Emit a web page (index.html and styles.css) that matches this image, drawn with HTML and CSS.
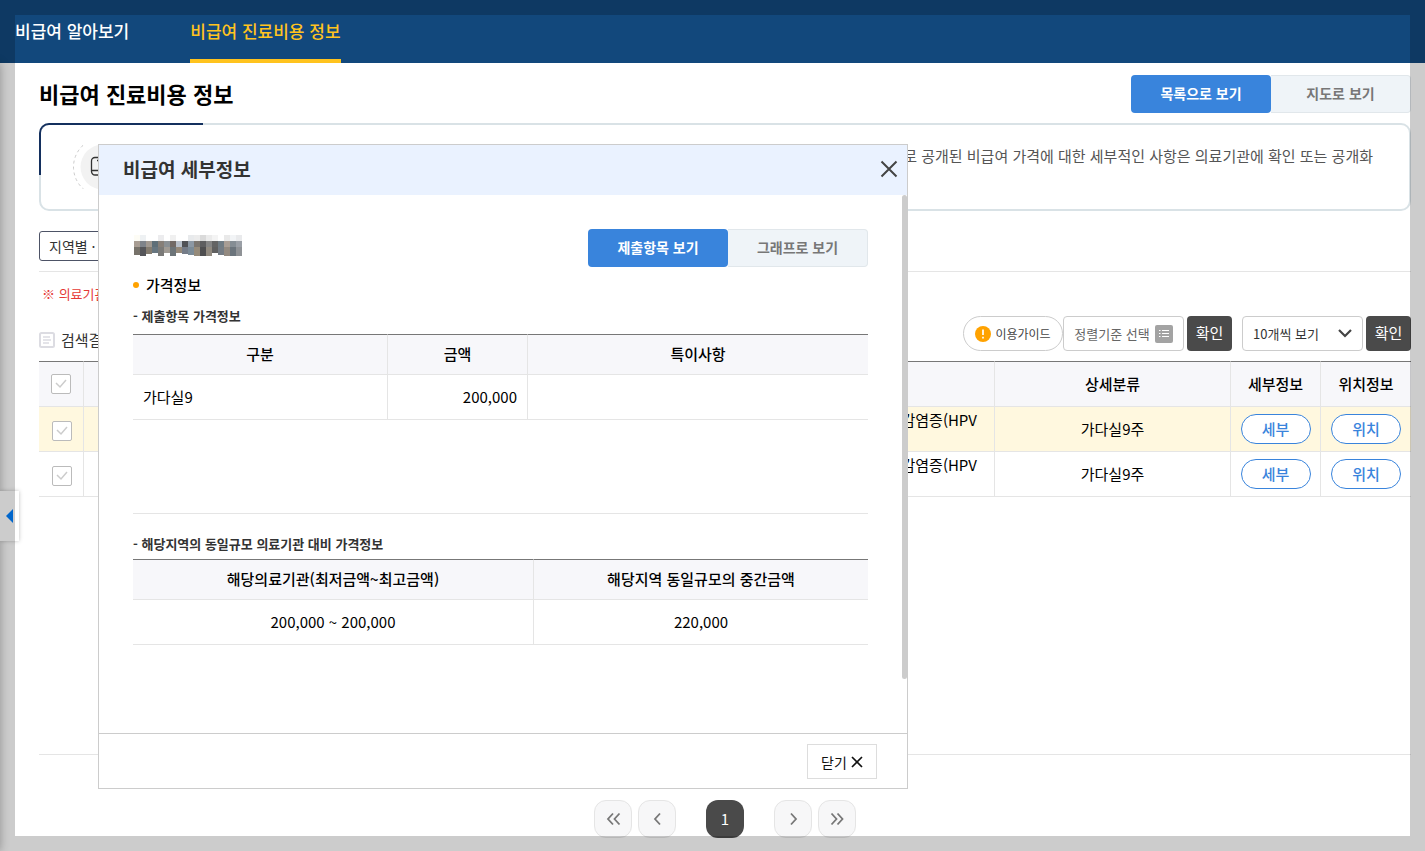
FILE: index.html
```html
<!DOCTYPE html>
<html lang="ko">
<head>
<meta charset="utf-8">
<title>비급여 진료비용 정보</title>
<link rel="stylesheet" href="styles.css">
</head>
<body>
<header class="gnb">
  <nav class="gnb-menu">
    <a href="#">비급여 알아보기</a>
    <a href="#" class="current" aria-current="page">비급여 진료비용 정보</a>
  </nav>
</header>

<main class="content">
  <div class="title-row">
    <h1>비급여 진료비용 정보</h1>
    <div class="toggle">
      <button type="button" class="on">목록으로 보기</button>
      <button type="button">지도로 보기</button>
    </div>
  </div>

  <section class="notice">
    <svg class="notice-icon" width="60" height="44" viewBox="0 0 60 44" fill="none">
      <circle cx="30" cy="22" r="29.500" stroke="#ccc" stroke-dasharray="3 3"/>
      <circle cx="30" cy="22" r="22.500" fill="#f2f2f2"/>
      <path d="M22 12.500h19v17.500H22a3.500 3.500 0 0 1-3.500-3.500V16a3.500 3.500 0 0 1 3.500-3.500zM18.500 25.500h22M24 15.500h2" stroke="#333" stroke-width="1.300"/>
    </svg>
    <p>으로 공개된 비급여 가격에 대한 세부적인 사항은 의료기관에 확인 또는 공개화</p>
  </section>

  <div class="filter"><button type="button" class="crumb">지역별 · 규모별</button></div>
  <p class="warn">※ 의료기관</p>

  <div class="toolbar">
    <h2>
      <svg width="16" height="16" viewBox="0 0 16 16" fill="none" stroke="#dcdce2"><rect x="1" y="1" width="14" height="14" rx="1.5" stroke-width="2"/><path d="M4 5h7M4 8h8M4 11h6" stroke-width="1.5"/></svg>
      검색결과
    </h2>
    <div class="tools">
      <button type="button" class="guide">
        <svg width="16" height="16" viewBox="0 0 16 16"><circle cx="8" cy="8" r="8" fill="#ffa200"/><path d="M8 3.500v5.500M8 10.700v1.800" stroke="#fff" stroke-width="1.700"/></svg>
        이용가이드
      </button>
      <button type="button" class="sort">정렬기준 선택
        <svg width="18" height="18" viewBox="0 0 18 18"><rect width="18" height="18" rx="2" fill="#a3a3a3"/><path d="M4 5.500h1.500M7 5.500h7M4 8.500h1.500M7 8.500h7M4 11.500h1.500M7 11.500h7" stroke="#fff"/></svg>
      </button>
      <button type="button" class="ok">확인</button>
      <select class="count" aria-label="표시 개수"><option>10개씩 보기</option></select>
      <button type="button" class="ok">확인</button>
    </div>
  </div>

  <table class="list">
    <colgroup><col class="c-check"><col><col class="c-item"><col class="c-detail"><col class="c-act"><col class="c-act"></colgroup>
    <thead>
      <tr><th><input type="checkbox" aria-label="전체 선택"></th><th></th><th></th><th>상세분류</th><th>세부정보</th><th>위치정보</th></tr>
    </thead>
    <tbody>
      <tr class="selected"><td class="pick"><input type="checkbox" aria-label="선택"></td><td></td><td class="item">감염증(HPV</td><td>가다실9주</td><td><button type="button" class="pill">세부</button></td><td><button type="button" class="pill">위치</button></td></tr>
      <tr><td class="pick"><input type="checkbox" aria-label="선택"></td><td></td><td class="item">감염증(HPV</td><td>가다실9주</td><td><button type="button" class="pill">세부</button></td><td><button type="button" class="pill">위치</button></td></tr>
    </tbody>
  </table>

  <nav class="pager" aria-label="페이지">
    <button type="button" aria-label="처음"><svg width="16" height="16" viewBox="0 0 16 16"><path d="M8 2.500 3 8l5 5.500M14.500 2.500 9.500 8l5 5.500"/></svg></button>
    <button type="button" aria-label="이전"><svg width="16" height="16" viewBox="0 0 16 16"><path d="M11 2.500 6 8l5 5.500"/></svg></button>
    <button type="button" class="page" aria-current="page">1</button>
    <button type="button" aria-label="다음"><svg width="16" height="16" viewBox="0 0 16 16"><path d="M6 2.500 11 8l-5 5.500"/></svg></button>
    <button type="button" aria-label="마지막"><svg width="16" height="16" viewBox="0 0 16 16"><path d="M2.500 2.500 7.500 8l-5 5.500M8.500 2.500 13.500 8l-5 5.500"/></svg></button>
  </nav>
</main>

<div class="side-shadow"></div>
<button type="button" class="side-tab" aria-label="메뉴 열기"><svg width="7" height="14" viewBox="0 0 7 14"><path d="M7 0v14L0 7z" fill="#0080ff"/></svg></button>

<section class="modal" role="dialog" aria-labelledby="modal-title">
  <header class="modal-head">
    <h2 id="modal-title">비급여 세부정보</h2>
    <button type="button" class="x" aria-label="닫기"><svg width="18" height="18" viewBox="0 0 18 18"><path d="M1.500 1.500l15 15M16.500 1.500l-15 15" stroke="#444" stroke-width="2"/></svg></button>
  </header>
  <div class="modal-body">
    <div class="hospital">
      <svg class="mosaic" width="109" height="22" viewBox="0 0 109 22" shape-rendering="crispEdges" role="img" aria-label="가려진 기관명">
        <g>
          <path fill="#fdfcf5" d="M1 0h6v6H1z"/><path fill="#eef1f3" d="M7 0h6v6H7z"/><path fill="#ececee" d="M25 0h6v6h-6z"/><path fill="#f0f0f0" d="M37 0h6v6h-6z"/>
          <path fill="#e8eaec" d="M55 0h6v6h-6z"/><path fill="#ececec" d="M61 0h6v6h-6z"/><path fill="#dadada" d="M67 0h6v6h-6z"/><path fill="#ebebeb" d="M73 0h6v6h-6z"/><path fill="#f4f4f4" d="M79 0h6v6h-6z"/>
          <path fill="#e9e9e9" d="M91 0h6v6h-6z"/><path fill="#f2f4f6" d="M97 0h6v6h-6z"/><path fill="#e9eaec" d="M103 0h6v6h-6z"/>
        </g>
        <g>
          <path fill="#a89d93" d="M1 6h6v6H1z"/><path fill="#7e838a" d="M7 6h6v6H7z"/><path fill="#a09890" d="M13 6h6v6h-6z"/><path fill="#5f6f78" d="M19 6h6v6h-6z"/><path fill="#867f78" d="M25 6h6v6h-6z"/><path fill="#8a9094" d="M31 6h6v6h-6z"/>
          <path fill="#726a66" d="M37 6h6v6h-6z"/><path fill="#b8c0ca" d="M43 6h6v6h-6z"/><path fill="#505256" d="M49 6h6v6h-6z"/><path fill="#8c98a4" d="M55 6h6v6h-6z"/><path fill="#7b7670" d="M61 6h6v6h-6z"/><path fill="#5e5e60" d="M67 6h6v6h-6z"/>
          <path fill="#858585" d="M73 6h6v6h-6z"/><path fill="#646464" d="M79 6h6v6h-6z"/><path fill="#707c84" d="M85 6h6v6h-6z"/><path fill="#a89d94" d="M91 6h6v6h-6z"/><path fill="#858d94" d="M97 6h6v6h-6z"/><path fill="#9a9fa6" d="M103 6h6v6h-6z"/>
        </g>
        <g>
          <path fill="#77726a" d="M1 12h6v8H1z"/><path fill="#55565a" d="M7 12h6v9H7z"/><path fill="#847c70" d="M13 12h6v7h-6z"/><path fill="#677680" d="M19 12h6v6h-6z"/><path fill="#7a7a78" d="M25 12h6v9h-6z"/><path fill="#a09b94" d="M31 12h6v6h-6z"/>
          <path fill="#6c7478" d="M37 12h6v9h-6z"/><path fill="#95897a" d="M43 12h6v6h-6z"/><path fill="#757c88" d="M49 12h6v7h-6z"/><path fill="#7b8b97" d="M55 12h6v8h-6z"/><path fill="#968b7a" d="M61 12h6v9h-6z"/><path fill="#4e4e50" d="M67 12h6v9h-6z"/>
          <path fill="#918a80" d="M73 12h6v9h-6z"/><path fill="#606060" d="M79 12h6v6h-6z"/><path fill="#747c84" d="M85 12h6v8h-6z"/><path fill="#938a80" d="M91 12h6v9h-6z"/><path fill="#6b747c" d="M97 12h6v9h-6z"/><path fill="#8f9296" d="M103 12h6v9h-6z"/>
        </g>
      </svg>
      <div class="toggle">
        <button type="button" class="on">제출항목 보기</button>
        <button type="button">그래프로 보기</button>
      </div>
    </div>
    <h3>가격정보</h3>
    <h4>- 제출항목 가격정보</h4>
    <div class="table-area">
      <table class="price">
        <colgroup><col class="p-name"><col class="p-cost"><col></colgroup>
        <thead><tr><th>구분</th><th>금액</th><th>특이사항</th></tr></thead>
        <tbody><tr><td class="left">가다실9</td><td class="right">200,000</td><td></td></tr></tbody>
      </table>
    </div>
    <h4>- 해당지역의 동일규모 의료기관 대비 가격정보</h4>
    <table class="price">
      <colgroup><col class="p-range"><col></colgroup>
      <thead><tr><th>해당의료기관(최저금액~최고금액)</th><th>해당지역 동일규모의 중간금액</th></tr></thead>
      <tbody><tr><td>200,000 ~ 200,000</td><td>220,000</td></tr></tbody>
    </table>
  </div>
  <footer class="modal-foot">
    <button type="button" class="close">닫기
      <svg width="12" height="12" viewBox="0 0 12 12"><path d="M1 1l10 10M11 1 1 11" stroke="#111" stroke-width="1.700"/></svg>
    </button>
  </footer>
</section>
<div class="frame"></div>
</body>
</html>
```

FILE: styles.css
```css
*, *::before, *::after { box-sizing: border-box; }
body {
  margin: 0;
  min-height: 100vh;
  background: #fff;
  color: #000;
  font: 15px/22px "Noto Sans CJK KR", "Noto Sans CJK JP", sans-serif;
  overflow: hidden;
}
h1, h2, h3, h4, p { margin: 0; }
button, select, input { font: inherit; margin: 0; padding: 0; }
button { display: inline-flex; align-items: center; justify-content: center; background: #fff; border: 1px solid #ccc; color: #333; }
svg { flex: none; }

.gnb { background: #12487c; padding: 0 15px; }
.gnb-menu { display: flex; gap: 61px; }
.gnb-menu a {
  height: 63px;
  line-height: 62px;
  color: #fff;
  font-size: 17px;
  font-weight: 500;
  text-decoration: none;
  border-bottom: 4px solid transparent;
}
.gnb-menu .current { color: #ffc31e; border-color: #ffc31e; }

.content { padding: 12px 14px 13px 39px; }
.title-row { display: flex; justify-content: space-between; align-items: flex-start; }
.title-row h1 { font-size: 22px; line-height: 36px; font-weight: 700; }
.toggle { display: flex; }
.toggle button {
  width: 140px;
  height: 38px;
  padding-bottom: 2px;
  background: #eff4f8;
  border: 1px solid #e1e7eb;
  border-left: 0;
  border-radius: 0 4px 4px 0;
  color: #777;
  font-size: 14px;
  font-weight: 700;
}
.toggle .on { background: #3984dc; border: 0; border-radius: 4px; color: #fff; }

.notice {
  position: relative;
  display: flex;
  justify-content: space-between;
  height: 88px;
  margin-top: 10px;
  padding: 20px 36px 0 32px;
  border: 2px solid #d9e2e6;
  border-radius: 10px;
}
.notice::before {
  content: "";
  position: absolute;
  left: -2px;
  top: -2px;
  width: 164px;
  height: 52px;
  border: solid #14305e;
  border-width: 2px 0 0 2px;
  border-radius: 10px 0 0 0;
}
.notice p { color: #555; }

.filter { display: flex; height: 61px; padding-top: 20px; border-bottom: 1px solid #e5e5e5; }
.crumb { height: 30px; padding: 0 9px 1px; border-color: #4d5366; border-radius: 3px; font-size: 14px; }
.warn { padding: 11px 3px 1px; color: #e53935; font-size: 13px; }
.toolbar { display: flex; justify-content: space-between; align-items: center; height: 35px; margin-top: 10px; }
.toolbar h2 { display: flex; align-items: center; gap: 6px; padding-top: 12px; font-size: 15px; font-weight: 400; color: #333; }
.tools { display: flex; }
.tools > * { height: 35px; border: 1px solid #ccc; border-radius: 4px; }
.tools .guide { width: 100px; gap: 4px; border-radius: 18px; font-size: 12px; color: #444; }
.tools .sort { width: 121px; gap: 5px; font-size: 13px; color: #666; }
.tools .ok { width: 45px; margin-left: 3px; padding-bottom: 2px; border: 0; background: #4a4a4a; color: #fff; }
.tools .count {
  width: 121px;
  margin-left: 10px;
  padding-left: 10px;
  appearance: none;
  font-size: 13px;
  color: #333;
  background: #fff url("data:image/svg+xml,%3Csvg xmlns='http://www.w3.org/2000/svg' width='14' height='9'%3E%3Cpath d='M1 1l6 6 6-6' fill='none' stroke='%23444' stroke-width='2.2'/%3E%3C/svg%3E") no-repeat right 10px center;
}

table { width: 100%; border-collapse: separate; border-spacing: 0; table-layout: fixed; }
th, td { padding: 0; text-align: center; font-weight: 500; border-bottom: 1px solid #e5e5e5; border-right: 1px solid #e5e5e5; }
th:last-child, td:last-child { border-right: 0; }
thead th { background: #f7f7fa; border-top: 1px solid #777; }
td { font-weight: 400; }
.list { margin-top: 10px; }
.list th { height: 46px; }
.list td { height: 45px; }
.list .pick { padding: 4px 0 0 2px; }
.c-check { width: 45px; }
.c-item { width: 236px; }
.c-detail { width: 236px; }
.c-act { width: 90px; }
.selected td { background: #fff8df; }
.list .item { padding: 2px 17px 0 0; text-align: right; vertical-align: top; }
.list input {
  display: block;
  width: 20px;
  height: 20px;
  margin: 0 auto;
  appearance: none;
  border: 1px solid #bbb;
  border-radius: 2px;
  background: #fff url("data:image/svg+xml,%3Csvg xmlns='http://www.w3.org/2000/svg' width='12' height='10'%3E%3Cpath d='M1 4l4 4 6-7' fill='none' stroke='%23ccc' stroke-width='1.5'/%3E%3C/svg%3E") no-repeat center;
}
.pill { width: 70px; height: 30px; border-color: #3984dc; border-radius: 15px; color: #3984dc; font-weight: 500; vertical-align: middle; }

.pager { display: flex; justify-content: center; gap: 6px; margin-top: 257px; padding-top: 45px; border-top: 1px solid #e5e5e5; }
.pager button { width: 38px; height: 38px; background: #f7f7f8; border-color: #e5e5e5; border-radius: 12px; }
.pager path { fill: none; stroke: #777; stroke-width: 1.8; }
.pager .page { margin: 0 24px; background: #4a4a4a; border: 0; color: #fff; }

.side-shadow { position: fixed; left: -10px; top: 63px; bottom: 0; width: 10px; box-shadow: 0 0 10px rgba(0, 0, 0, .3); }
.side-tab { position: fixed; left: 0; top: 491px; width: 19px; height: 50px; border: 0; box-shadow: 0 0 4px rgba(0, 0, 0, .25); }

.modal { position: fixed; left: 98px; top: 144px; width: 810px; background: #fff; border: 1px solid #ccc; z-index: 2; }
.modal-head { display: flex; justify-content: space-between; align-items: center; height: 50px; padding: 0 9px 2px 24px; background: #eaf2ff; }
.modal-head h2 { font-size: 19px; line-height: 28px; font-weight: 700; color: #333; }
.x { background: none; border: 0; }
.modal-body { position: relative; height: 538px; padding: 34px 39px 0 34px; }
.modal-body::after { content: ""; position: absolute; right: 0; top: 0; width: 5px; height: 484px; border-radius: 3px; background: #ccc; }
.hospital { display: flex; justify-content: space-between; align-items: flex-start; }
.mosaic { margin-top: 6px; }
h3 { display: flex; align-items: center; gap: 7px; margin-top: 7px; font-size: 15px; font-weight: 500; }
h3::before { content: ""; width: 6px; height: 6px; border-radius: 50%; background: #ffa200; }
h4 { margin: 9px 0 7px; font-size: 13px; font-weight: 700; color: #333; }
.table-area { height: 180px; border-bottom: 1px solid #e5e5e5; }
.table-area + h4 { margin: 19px 0 4px; }
.price th { height: 41px; padding-bottom: 2px; }
.price td { height: 45px; }
.price .left { padding-left: 10px; text-align: left; }
.price .right { padding-right: 10px; text-align: right; }
.p-name { width: 255px; }
.p-cost { width: 140px; }
.p-range { width: 401px; }
.modal-foot { display: flex; justify-content: flex-end; padding: 10px 30px 9px; border-top: 1px solid #ccc; }
.close { width: 70px; height: 35px; gap: 4px; border-color: #ddd; font-size: 14px; color: #111; }

.frame { position: fixed; inset: 0; border: 15px solid rgba(0, 0, 0, .2); pointer-events: none; z-index: 3; }
```
